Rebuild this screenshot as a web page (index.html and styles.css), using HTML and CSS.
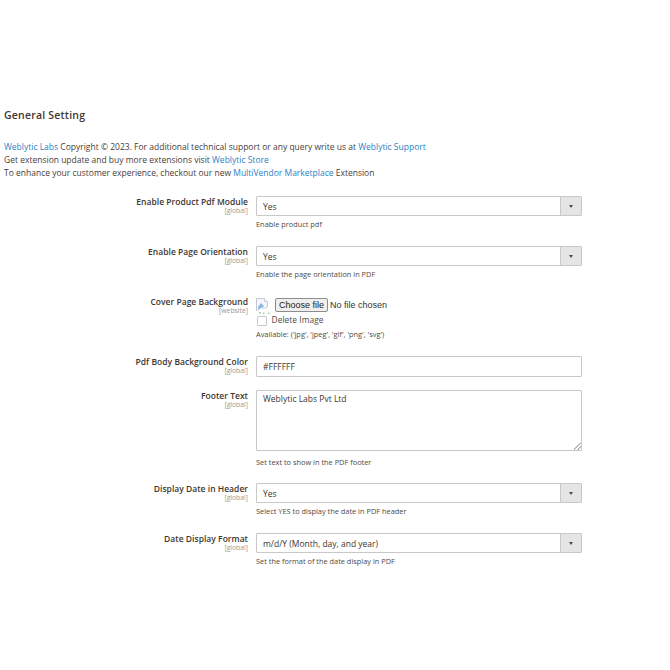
FILE: index.html
```html
<!DOCTYPE html>
<html lang="en">
<head>
<meta charset="utf-8">
<title>General Setting</title>
<link rel="stylesheet" href="styles.css">
</head>
<body>
<main class="page">
  <h2 class="title">General Setting</h2>
  <div class="intro">
    <p><a href="#">Weblytic Labs</a> Copyright © 2023. For additional technical support or any query write us at <a href="#">Weblytic Support</a></p>
    <p>Get extension update and buy more extensions visit <a href="#">Weblytic Store</a></p>
    <p>To enhance your customer experience, checkout our new <a href="#">MultiVendor Marketplace</a> Extension</p>
  </div>
  <form class="form">
    <div class="row r1">
      <div class="label"><strong>Enable Product Pdf Module</strong><small>[global]</small></div>
      <div class="control">
        <div class="select"><span>Yes</span><i class="arrow"></i></div>
        <p class="note">Enable product pdf</p>
      </div>
    </div>
    <div class="row r2">
      <div class="label"><strong>Enable Page Orientation</strong><small>[global]</small></div>
      <div class="control">
        <div class="select"><span>Yes</span><i class="arrow"></i></div>
        <p class="note">Enable the page orientation in PDF</p>
      </div>
    </div>
    <div class="row r3">
      <div class="label"><strong>Cover Page Background</strong><small>[website]</small></div>
      <div class="control">
        <div class="file">
          <svg class="broken" width="15" height="16" viewBox="0 0 15 16"><path d="M.5.5h8l3 3v5l-3 2-3-1-5 3z" fill="#f4f6fa" stroke="#c3cad6"/><path d="M8.500.5v3h3" fill="#fff" stroke="#c3cad6"/><path d="M2 9l3-4 3 3-3 2-3 1z" fill="#8ab6e2"/><path d="M3 14h2v1.500H3zM7 14.500h1.500V16H7zM12 14.500h1.500V16H12z" fill="#a8cba8"/></svg>
          <button type="button" class="file-btn">Choose file</button>
          <span class="file-name">No file chosen</span>
        </div>
        <label class="delete"><span class="box"></span><span class="delete-text">Delete Image</span></label>
        <p class="note avail">Available: ('jpg', 'jpeg', 'gif', 'png', 'svg')</p>
      </div>
    </div>
    <div class="row r4">
      <div class="label"><strong>Pdf Body Background Color</strong><small>[global]</small></div>
      <div class="control"><input class="text" type="text" value="#FFFFFF"></div>
    </div>
    <div class="row r5">
      <div class="label"><strong>Footer Text</strong><small>[global]</small></div>
      <div class="control">
        <textarea class="area">Weblytic Labs Pvt Ltd</textarea>
        <p class="note">Set text to show in the PDF footer</p>
      </div>
    </div>
    <div class="row r6">
      <div class="label"><strong>Display Date in Header</strong><small>[global]</small></div>
      <div class="control">
        <div class="select"><span>Yes</span><i class="arrow"></i></div>
        <p class="note">Select YES to display the date in PDF header</p>
      </div>
    </div>
    <div class="row">
      <div class="label"><strong>Date Display Format</strong><small>[global]</small></div>
      <div class="control">
        <div class="select"><span>m/d/Y (Month, day, and year)</span><i class="arrow"></i></div>
        <p class="note">Set the format of the date display in PDF</p>
      </div>
    </div>
  </form>
</main>
</body>
</html>
```
FILE: styles.css
```css
* { box-sizing: border-box; }
html, body { margin: 0; background: #fff; }
body { font-family: "Open Sans", "Noto Sans", sans-serif; color: #41362f; }
.page { width: 670px; height: 670px; padding: 108px 0 0 4px; overflow: hidden; }
.title { margin: 0; font-size: 10.5px; line-height: 15px; font-weight: 600; letter-spacing: .2px; color: #41362f; }
.intro { margin-top: 17px; font-size: 8.5px; line-height: 13px; color: #4a403a; }
.intro p { margin: 0; }
a { color: #2a83c9; text-decoration: none; }
.form { margin-top: 17px; }
.row { display: flex; align-items: flex-start; margin-left: -4px; }
.r1, .r2 { height: 50px; }
.r3 { height: 60px; }
.r4 { height: 34px; }
.r5 { height: 93px; }
.r6 { height: 50px; }
.label { width: 248px; display: flex; flex-direction: column; align-items: flex-end; }
.label strong { font-size: 8.5px; line-height: 11px; font-weight: 600; letter-spacing: .02px; color: #41362f; }
.label small { font-size: 6.8px; line-height: 8px; color: #999; }
.control { margin-left: 8px; width: 326px; }
.select { height: 20px; display: flex; align-items: stretch; border: 1px solid #c8c8c8; border-radius: 1px; background: #fff; font-size: 8.5px; color: #41362f; }
.select span { flex: 1; padding-left: 6px; line-height: 20px; }
.arrow { width: 21px; background: #e5e5e5; border-left: 1px solid #c8c8c8; display: flex; align-items: center; justify-content: center; }
.arrow::after { content: ""; border: 2.500px solid transparent; border-top: 3px solid #514943; border-bottom: 0; }
.note { margin: 0; padding-top: 3px; font-size: 7.4px; line-height: 11px; color: #514943; }
.file { display: flex; align-items: flex-start; height: 17px; }
.broken { flex: none; margin-top: 2px; }
.file-btn { flex: none; width: 53px; height: 14px; margin: 2px 0 0 4px; padding: 0; font: 9px "Liberation Sans", sans-serif; border: 1px solid #8d8d8d; border-radius: 2px; background: #efefef; color: #222; }
.file-name { margin: 2px 0 0 2px; font: 9px/14px "Liberation Sans", sans-serif; color: #333; }
.delete { display: flex; align-items: center; height: 12px; margin-top: 2px; font-size: 8.4px; color: #514943; letter-spacing: .05px; }
.delete-text { line-height: 10px; margin-top: -2px; }
.box { width: 10px; height: 10px; border: 1px solid #c8c8c8; border-radius: 1px; margin: 0 5px 0 .5px; background: #fff; }
.avail { padding-top: 2px; }
.text { display: block; width: 100%; height: 21px; border: 1px solid #c8c8c8; border-radius: 1px; padding: 0 6px; font: 8.5px "Open Sans", sans-serif; color: #41362f; outline: 0; }
.area { display: block; width: 100%; height: 61px; border: 1px solid #c8c8c8; border-radius: 1px; padding: 1px 6px; font: 8.5px/13px "Open Sans", sans-serif; color: #41362f; outline: 0; resize: vertical; margin: 0; }
.area::-webkit-resizer { background: linear-gradient(135deg, transparent 40%, #bbb 40%, #bbb 52%, transparent 52%, transparent 68%, #bbb 68%, #bbb 80%, transparent 80%) no-repeat right bottom / 7px 7px; }
.r5 .note { padding-top: 6px; }
```
